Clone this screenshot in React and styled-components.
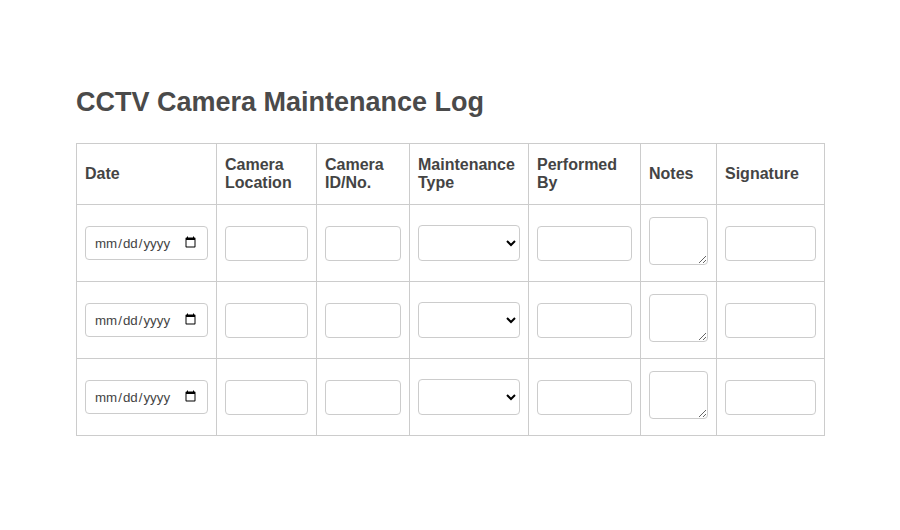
import styled, { createGlobalStyle } from "styled-components";

const GlobalStyle = createGlobalStyle`
  body {
    margin: 0;
    background: #fff;
    font-family: "Liberation Sans", Arial, sans-serif;
    color: #444;
  }
`;

const Page = styled.div`
  max-width: 748px;
  margin: 0 auto;
  padding-top: 86px;
`;

const Title = styled.h1`
  font-size: 27px;
  font-weight: bold;
  color: #4a4a4a;
  margin: 0 0 25px;
  line-height: 32px;
`;

const Table = styled.table`
  width: 100%;
  border-collapse: collapse;
  table-layout: fixed;
`;

const Col = styled.col`
  width: ${(p) => p.$w}px;
`;

const Th = styled.th`
  border: 1px solid #ccc;
  padding: 12px 8px;
  text-align: left;
  font-size: 16px;
  font-weight: bold;
  color: #444;
`;

const Td = styled.td`
  border: 1px solid #ccc;
  padding: 12px 8px;
`;

const Field = styled.input`
  width: 100%;
  height: ${(p) => (p.type === "date" ? 34 : 35)}px;
  box-sizing: border-box;
  padding: 8px;
  border: 1px solid #ccc;
  border-radius: 4px;
  font-family: "Liberation Sans", Arial, sans-serif;
  font-size: 13.33px;
  color: #444;
`;

const Select = styled.select`
  width: 100%;
  height: 36px;
  box-sizing: border-box;
  padding: 8px;
  border: 1px solid #ccc;
  border-radius: 4px;
  background: #fff;
`;

const Notes = styled.textarea`
  width: 100%;
  box-sizing: border-box;
  padding: 8px;
  border: 1px solid #ccc;
  border-radius: 4px;
`;

const columns = [
  ["Date", 140],
  ["Camera Location", 100],
  ["Camera ID/No.", 93],
  ["Maintenance Type", 119],
  ["Performed By", 112],
  ["Notes", 76],
  ["Signature", 108],
];

export default function App() {
  return (
    <>
      <GlobalStyle />
      <Page>
        <Title>CCTV Camera Maintenance Log</Title>
        <Table>
          <colgroup>
            {columns.map(([h, w]) => (
              <Col key={h} $w={w} />
            ))}
          </colgroup>
          <thead>
            <tr>
              {columns.map(([h]) => (
                <Th key={h}>{h}</Th>
              ))}
            </tr>
          </thead>
          <tbody>
            {[0, 1, 2].map((i) => (
              <tr key={i}>
                <Td>
                  <Field type="date" />
                </Td>
                <Td>
                  <Field type="text" />
                </Td>
                <Td>
                  <Field type="text" />
                </Td>
                <Td>
                  <Select>
                    <option value=""></option>
                    <option>Inspection</option>
                    <option>Cleaning</option>
                    <option>Repair</option>
                  </Select>
                </Td>
                <Td>
                  <Field type="text" />
                </Td>
                <Td>
                  <Notes />
                </Td>
                <Td>
                  <Field type="text" />
                </Td>
              </tr>
            ))}
          </tbody>
        </Table>
      </Page>
    </>
  );
}
